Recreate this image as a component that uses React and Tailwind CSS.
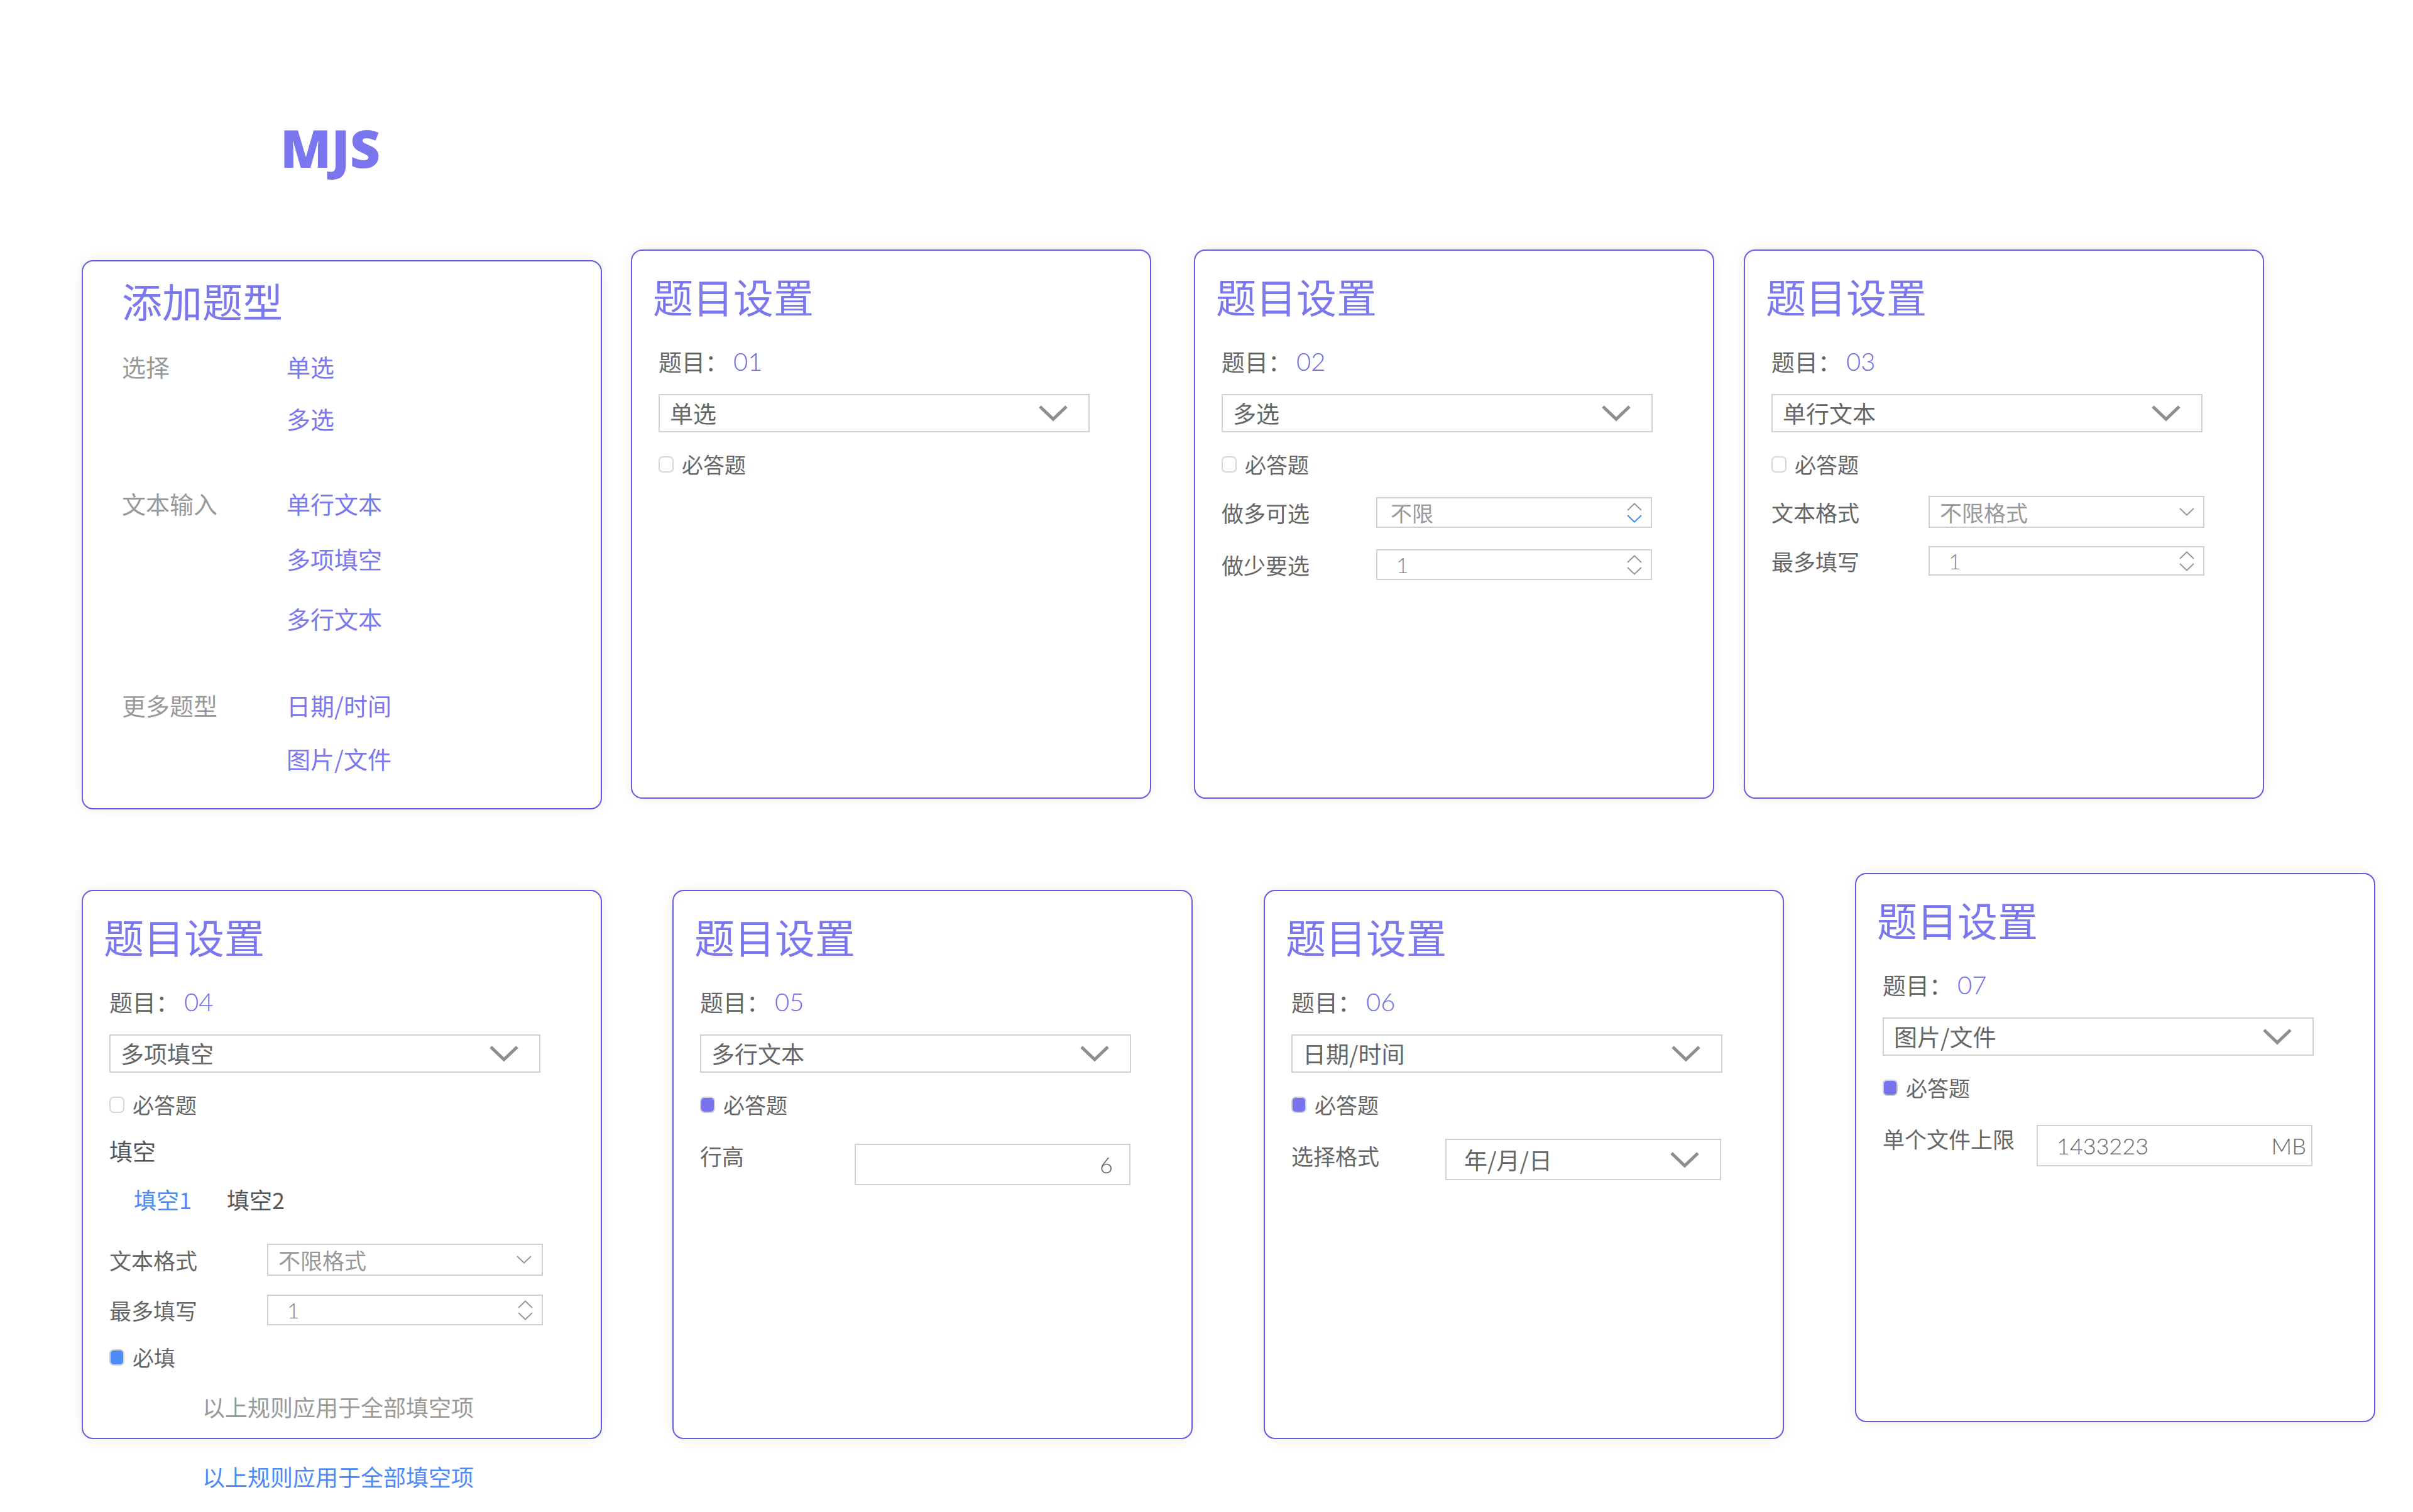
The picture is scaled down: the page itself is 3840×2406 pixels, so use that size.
import React from "react";

function BigChevron() {
  return (
    <svg width="48" height="27" viewBox="0 0 48 27" fill="none" aria-hidden>
      <path d="M3 3 L24 23 L45 3" stroke="#8e8e8e" strokeWidth="5" />
    </svg>
  );
}

function SmallChevron() {
  return (
    <svg width="24" height="13" viewBox="0 0 24 13" fill="none" aria-hidden>
      <path d="M1 1 L12 11.5 L23 1" stroke="#9a9a9a" strokeWidth="2" />
    </svg>
  );
}

function Spinner({ downBlue }) {
  return (
    <svg width="24" height="32" viewBox="0 0 24 32" fill="none" aria-hidden>
      <path d="M1 12 L12 1.5 L23 12" stroke="#9a9a9a" strokeWidth="2" />
      <path d="M1 20 L12 30.5 L23 20" stroke={downBlue ? "#4b8af5" : "#9a9a9a"} strokeWidth="2" />
    </svg>
  );
}

function Card({ className = "", children }) {
  return (
    <div
      className={`flex h-[874px] w-[828px] shrink-0 flex-col rounded-[18px] border-2 border-[#625ce6] bg-white shadow-[0_0_22px_rgba(0,0,0,0.07)] ${className}`}
    >
      {children}
    </div>
  );
}

function Title() {
  return <h2 className="-ml-[9px] text-[64px] leading-none text-[#7b77ee]">题目设置</h2>;
}

function QRow({ num }) {
  return (
    <div className="mt-[53px] flex h-[40px] items-center">
      <span className="text-[37px] leading-none text-[#666]">题目：</span>
      <span className="ml-[8px] font-['Lato',sans-serif] text-[40px] font-light leading-none text-[#6f6be9]">{num}</span>
    </div>
  );
}

function Select({ value }) {
  return (
    <div className="mt-[32px] flex h-[61px] w-[686px] items-center justify-between border-2 border-[#d0d0d0] pl-[16px] pr-[32px]">
      <span className="text-[37px] leading-none text-[#666]">{value}</span>
      <BigChevron />
    </div>
  );
}

function Check({ label, tone = "none", className = "mt-[34px]" }) {
  const box =
    tone === "purple"
      ? "bg-[#7774ee] border-[#cfcfcf]"
      : tone === "blue"
        ? "bg-[#4b8af7] border-[#cfcfcf]"
        : "bg-white border-[#d6d6d6]";
  return (
    <div className={`flex h-[34px] items-center ${className}`}>
      <span className={`h-[26px] w-[24px] rounded-[7px] border-2 ${box}`} />
      <span className="ml-[13px] text-[34px] leading-none text-[#666]">{label}</span>
    </div>
  );
}

function Field({ label, className = "", labelW = "w-[246px]", children }) {
  return (
    <div className={`flex items-center ${className}`}>
      <span className={`${labelW} shrink-0 text-[35px] leading-none text-[#666]`}>{label}</span>
      {children}
    </div>
  );
}

function Box({ className = "", children }) {
  return (
    <div className={`flex w-[439px] items-center justify-between border-2 border-[#d0d0d0] ${className}`}>{children}</div>
  );
}

function Body({ children }) {
  return <div className="flex flex-col pl-[42px] pt-[39px]">{children}</div>;
}

function AddRow({ label, item, className }) {
  return (
    <div className={`flex ${className}`}>
      <span className="w-[262px] text-[38px] leading-none text-[#999]">{label}</span>
      <span className="text-[38px] leading-none text-[#7b77ee]">{item}</span>
    </div>
  );
}

function AddCard({ className }) {
  return (
    <Card className={className}>
      <div className="flex flex-col pl-[62px] pt-[29px]">
        <h2 className="text-[64px] leading-none text-[#7b77ee]">添加题型</h2>
        <AddRow className="mt-[55px]" label="选择" item="单选" />
        <AddRow className="mt-[45px]" item="多选" />
        <AddRow className="mt-[97px]" label="文本输入" item="单行文本" />
        <AddRow className="mt-[50px]" item="多项填空" />
        <AddRow className="mt-[57px]" item="多行文本" />
        <AddRow className="mt-[100px]" label="更多题型" item="日期/时间" />
        <AddRow className="mt-[47px]" item="图片/文件" />
      </div>
    </Card>
  );
}

export default function App() {
  return (
    <div className="h-[2406px] w-[3840px] overflow-hidden bg-white font-['Noto_Sans_CJK_SC','Noto_Sans',sans-serif]">
      <div className="pl-[446px] pt-[193px] font-['Open_Sans',sans-serif] text-[84px] font-extrabold leading-none text-[#7a76ef]">
        MJS
      </div>

      <div className="mt-[120px] flex items-start pl-[130px]">
        <AddCard className="mt-[17px]" />

        <Card className="ml-[46px]">
          <Body>
            <Title />
            <QRow num="01" />
            <Select value="单选" />
            <Check label="必答题" />
          </Body>
        </Card>

        <Card className="ml-[68px]">
          <Body>
            <Title />
            <QRow num="02" />
            <Select value="多选" />
            <Check label="必答题" />
            <Field label="做多可选" className="mt-[35px]">
              <Box className="h-[49px] pl-[21px] pr-[14px]">
                <span className="text-[34px] leading-none text-[#999]">不限</span>
                <Spinner downBlue />
              </Box>
            </Field>
            <Field label="做少要选" className="mt-[34px]">
              <Box className="h-[49px] pl-[30px] pr-[14px]">
                <span className="font-['Lato',sans-serif] text-[34px] font-light leading-none text-[#888]">1</span>
                <Spinner />
              </Box>
            </Field>
          </Body>
        </Card>

        <Card className="ml-[47px]">
          <Body>
            <Title />
            <QRow num="03" />
            <Select value="单行文本" />
            <Check label="必答题" />
            <Field label="文本格式" className="mt-[33px]" labelW="w-[250px]">
              <Box className="h-[51px] pl-[16px] pr-[14px]">
                <span className="text-[35px] leading-none text-[#999]">不限格式</span>
                <SmallChevron />
              </Box>
            </Field>
            <Field label="最多填写" className="mt-[29px]" labelW="w-[250px]">
              <Box className="h-[47px] pl-[30px] pr-[14px]">
                <span className="font-['Lato',sans-serif] text-[34px] font-light leading-none text-[#888]">1</span>
                <Spinner />
              </Box>
            </Field>
          </Body>
        </Card>
      </div>

      <div className="mt-[101px] flex items-start pl-[130px]">
        <div className="mt-[27px] flex flex-col">
          <Card>
            <Body>
              <Title />
              <QRow num="04" />
              <Select value="多项填空" />
              <Check label="必答题" />
              <span className="mt-[38px] text-[37px] leading-none text-[#555]">填空</span>
              <div className="mt-[40px] flex pl-[39px]">
                <span className="w-[148px] text-[36px] leading-none text-[#4b8af7]">填空1</span>
                <span className="text-[36px] leading-none text-[#555]">填空2</span>
              </div>
              <Field label="文本格式" className="mt-[53px]" labelW="w-[251px]">
                <Box className="h-[51px] pl-[16px] pr-[16px]">
                  <span className="text-[35px] leading-none text-[#999]">不限格式</span>
                  <SmallChevron />
                </Box>
              </Field>
              <Field label="最多填写" className="mt-[30px]" labelW="w-[251px]">
                <Box className="h-[49px] pl-[30px] pr-[14px]">
                  <span className="font-['Lato',sans-serif] text-[34px] font-light leading-none text-[#888]">1</span>
                  <Spinner />
                </Box>
              </Field>
              <Check label="必填" tone="blue" />
              <span className="ml-[148px] mt-[43px] text-[36px] leading-none text-[#999]">以上规则应用于全部填空项</span>
            </Body>
          </Card>
          <span className="ml-[192px] mt-[41px] text-[36px] leading-none text-[#4b8af7]">以上规则应用于全部填空项</span>
        </div>

        <Card className="ml-[112px] mt-[27px]">
          <Body>
            <Title />
            <QRow num="05" />
            <Select value="多行文本" />
            <Check label="必答题" tone="purple" />
            <div className="mt-[45px] flex items-start">
              <span className="w-[246px] shrink-0 pt-[1px] text-[35px] leading-none text-[#666]">行高</span>
              <Box className="h-[66px] justify-end pr-[26px]">
                <span className="font-['Lato',sans-serif] text-[36px] font-light leading-none text-[#666]">6</span>
              </Box>
            </div>
          </Body>
        </Card>

        <Card className="ml-[113px] mt-[27px]">
          <Body>
            <Title />
            <QRow num="06" />
            <Select value="日期/时间" />
            <Check label="必答题" tone="purple" />
            <div className="mt-[37px] flex items-start">
              <span className="w-[245px] shrink-0 pt-[9px] text-[35px] leading-none text-[#666]">选择格式</span>
              <Box className="h-[66px] pl-[28px] pr-[32px]">
                <span className="text-[37px] leading-none text-[#666]">年/月/日</span>
                <BigChevron />
              </Box>
            </div>
          </Body>
        </Card>

        <Card className="ml-[113px]">
          <Body>
            <Title />
            <QRow num="07" />
            <Select value="图片/文件" />
            <Check label="必答题" tone="purple" />
            <div className="mt-[42px] flex items-start">
              <span className="w-[245px] shrink-0 pt-[4px] text-[35px] leading-none text-[#666]">单个文件上限</span>
              <Box className="h-[66px] pl-[30px] pr-[8px]">
                <span className="font-['Lato',sans-serif] text-[36px] font-light leading-none text-[#666]">1433223</span>
                <span className="font-['Lato',sans-serif] text-[36px] font-light leading-none text-[#666]">MB</span>
              </Box>
            </div>
          </Body>
        </Card>
      </div>
    </div>
  );
}
